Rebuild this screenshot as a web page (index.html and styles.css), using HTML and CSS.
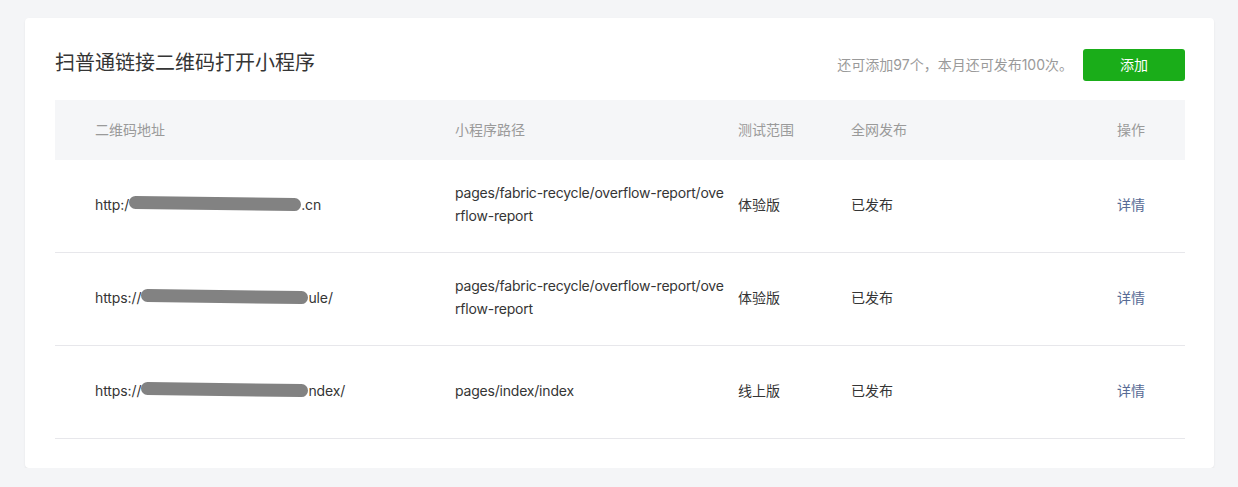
FILE: index.html
```html
<!DOCTYPE html>
<html lang="zh-CN">
<head>
<meta charset="utf-8">
<title>扫普通链接二维码打开小程序</title>
<link rel="stylesheet" href="styles.css">
</head>
<body>
<div class="card">
  <div class="card-head">
    <h2 class="title">扫普通链接二维码打开小程序</h2>
    <div class="head-right">
      <span class="quota">还可添加97个，本月还可发布100次。</span>
      <button class="btn-add">添加</button>
    </div>
  </div>
  <div class="table">
    <div class="row head">
      <div class="cell c1">二维码地址</div>
      <div class="cell c2">小程序路径</div>
      <div class="cell c3">测试范围</div>
      <div class="cell c4">全网发布</div>
      <div class="cell c5">操作</div>
    </div>
    <div class="row">
      <div class="cell c1"><span class="url">http:/<span class="mask m1"></span>.cn</span></div>
      <div class="cell c2"><span class="path">pages/fabric-recycle/overflow-report/overflow-report</span></div>
      <div class="cell c3">体验版</div>
      <div class="cell c4">已发布</div>
      <div class="cell c5"><a class="link" href="#">详情</a></div>
    </div>
    <div class="row">
      <div class="cell c1"><span class="url">https://<span class="mask m2"></span>ule/</span></div>
      <div class="cell c2"><span class="path">pages/fabric-recycle/overflow-report/overflow-report</span></div>
      <div class="cell c3">体验版</div>
      <div class="cell c4">已发布</div>
      <div class="cell c5"><a class="link" href="#">详情</a></div>
    </div>
    <div class="row">
      <div class="cell c1"><span class="url">https://<span class="mask m2"></span>ndex/</span></div>
      <div class="cell c2"><span class="path">pages/index/index</span></div>
      <div class="cell c3">线上版</div>
      <div class="cell c4">已发布</div>
      <div class="cell c5"><a class="link" href="#">详情</a></div>
    </div>
  </div>
</div>
</body>
</html>
```
FILE: styles.css
```css
* { box-sizing: border-box; }
body {
  margin: 0;
  background: #f4f5f7;
  font-family: "Inter", "Noto Sans CJK SC", sans-serif;
  color: #353535;
  font-size: 14px;
}
.card {
  margin: 18px 0 0 25px;
  width: 1189px;
  height: 450px;
  background: #fff;
  border-radius: 4px;
  box-shadow: 0 1px 2px rgba(0,0,0,0.08);
  padding: 31px 29px 30px 30px;
}
.card-head {
  display: flex;
  align-items: center;
  justify-content: space-between;
  height: 32px;
  margin-bottom: 19px;
}
.title {
  margin: 0 0 5px;
  font-size: 20px;
  font-weight: 400;
  color: #353535;
  line-height: 28px;
}
.head-right {
  display: flex;
  align-items: center;
  gap: 10px;
}
.quota {
  color: #9a9a9a;
  font-size: 14px;
  padding-bottom: 2px;
}
.btn-add {
  width: 102px;
  height: 32px;
  border: none;
  border-radius: 3px;
  background: #1aad19;
  color: #fff;
  font-family: inherit;
  font-size: 14px;
  padding: 0 0 2px;
}
.table {
  width: 1130px;
}
.row {
  display: grid;
  grid-template-columns: 400px 283px 113px 266px 68px;
  height: 93px;
  border-bottom: 1px solid #e7e7eb;
  align-items: center;
}
.row.head {
  height: 60px;
  background: #f5f6f8;
  border-bottom: none;
  color: #9a9a9a;
}
.row.head .cell { padding-bottom: 2px; }
.cell {
  line-height: 23px;
  padding-bottom: 4px;
}
.c1 { padding-left: 40px; }
.c2 { padding-right: 12px; }
.path { word-break: break-all; letter-spacing: -0.2px; }
.url { white-space: nowrap; letter-spacing: -0.1px; }
.mask {
  display: inline-block;
  position: relative;
  height: 14px;
  vertical-align: -1px;
}
.m1 { width: 172px; }
.m2 { width: 167px; }
.mask::after {
  content: "";
  position: absolute;
  left: 0;
  right: 0;
  top: 0;
  height: 13px;
  background: #828282;
  border-radius: 7px;
  transform: rotate(0.8deg);
}
.link {
  color: #576b95;
  text-decoration: none;
}
```
